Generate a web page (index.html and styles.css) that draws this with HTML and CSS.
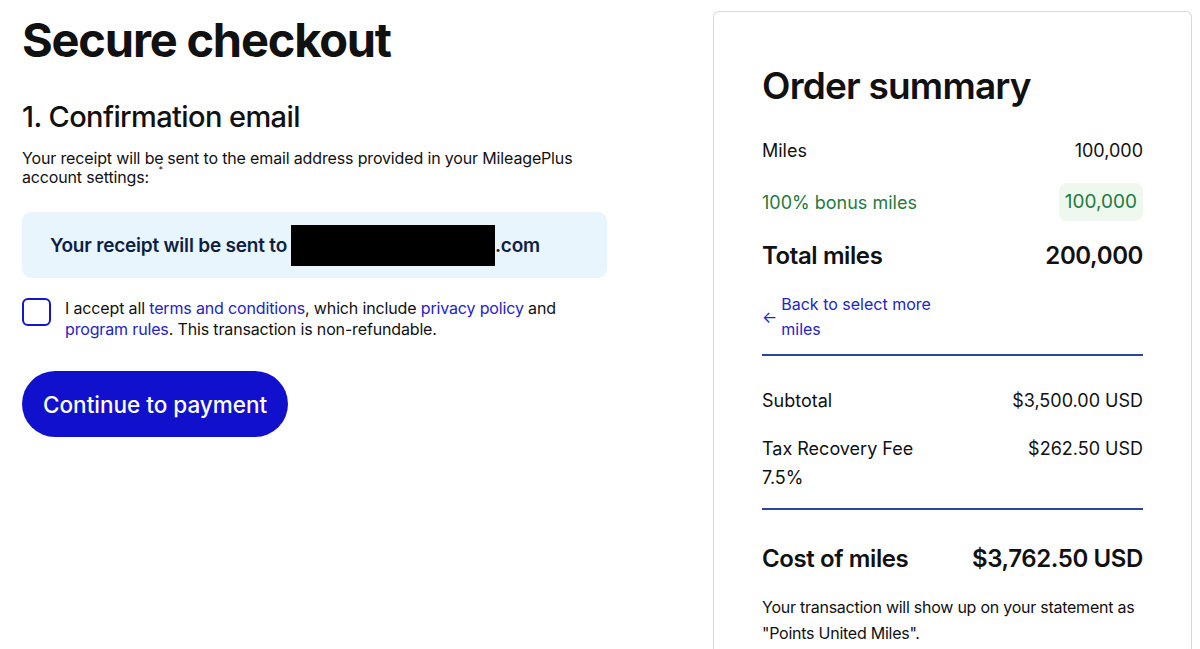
FILE: index.html
```html
<!DOCTYPE html>
<html>
<head>
<meta charset="utf-8">
<link rel="stylesheet" href="styles.css">
</head>
<body>
<div class="page">
  <main class="left">
    <h1 class="title">Secure checkout</h1>
    <h2 class="section">1. Confirmation email</h2>
    <p class="intro">Your receipt will be<span class="ast">*</span> sent to the email address provided in your MileagePlus<br>account settings:</p>
    <div class="receipt">
      <span class="receipt-text">Your receipt will be sent to</span><span class="redact"></span><span class="receipt-text">.com</span>
    </div>
    <div class="accept">
      <span class="checkbox"></span>
      <p class="accept-text">I accept all <a class="link">terms and conditions</a>, which include <a class="link">privacy policy</a> and <a class="link">program rules</a>. This transaction is non-refundable.</p>
    </div>
    <button class="cta">Continue to payment</button>
  </main>
  <aside class="summary">
    <h2 class="sum-title">Order summary</h2>
    <div class="row miles"><span>Miles</span><span>100,000</span></div>
    <div class="row bonus"><span>100% bonus miles</span><span class="pill">100,000</span></div>
    <div class="row total"><span>Total miles</span><span>200,000</span></div>
    <div class="back"><span class="arrow">&larr;</span><a class="link back-text">Back to select more<br>miles</a></div>
    <div class="rule"></div>
    <div class="row sub"><span>Subtotal</span><span>$3,500.00 USD</span></div>
    <div class="row tax"><span>Tax Recovery Fee<br>7.5%</span><span>$262.50 USD</span></div>
    <div class="rule"></div>
    <div class="row cost"><span>Cost of miles</span><span>$3,762.50 USD</span></div>
    <p class="note">Your transaction will show up on your statement as "Points United Miles".</p>
  </aside>
</div>
</body>
</html>
```
FILE: styles.css
```css
* { box-sizing: border-box; }
html, body { margin: 0; padding: 0; background: #fff; }
body { font-family: Inter, "Noto Sans", sans-serif; color: #111; overflow: hidden; height: 649px; }
.page { display: flex; gap: 106px; padding: 11px 9px 0 22px; align-items: flex-start; }
.left { width: 585px; flex: none; }
.title { font-size: 47px; font-weight: 700; letter-spacing: -1.2px; margin: 1px 0 0; line-height: 56px; }
.section { font-size: 29px; font-weight: 500; letter-spacing: -0.6px; margin: 31px 0 0; line-height: 36px; }
.intro { font-size: 16px; line-height: 16px; margin: 15px 0 0; letter-spacing: -0.15px; }
.ast { font-size: 9px; position: relative; top: 9px; margin-left: -5px; }
.receipt { margin-top: 27px; height: 66px; background: #e9f5fd; border-radius: 9px; display: flex; align-items: center; padding-left: 28px; }
.receipt-text { font-size: 19px; font-weight: 600; color: #0d1f44; letter-spacing: -0.2px; }
.redact { display: inline-block; width: 204px; height: 41px; background: #000; margin-left: 4px; }
.accept { display: flex; gap: 14px; margin-top: 20px; align-items: flex-start; }
.checkbox { width: 29px; height: 28px; border: 2px solid #1515c9; border-radius: 6px; flex: none; }
.accept-text { font-size: 16px; line-height: 21px; margin: 0; letter-spacing: -0.15px; }
.link { color: #2323c8; text-decoration: none; }
.cta { margin-top: 31px; height: 66px; padding: 0 21px; border: none; border-radius: 33px; background: #1111cd; color: #fff; font-family: inherit; font-size: 22.5px; font-weight: 500; }
.summary { width: 479px; flex: none; border: 1px solid #d5d9de; border-bottom: none; border-radius: 6px 6px 0 0; padding: 49px 48px 0 48px; height: 638px; overflow: hidden; }
.sum-title { font-size: 37px; font-weight: 600; letter-spacing: -0.8px; margin: 1px 0 0; line-height: 48px; }
.row { display: flex; justify-content: space-between; align-items: flex-start; }
.miles { font-size: 18px; margin-top: 29px; line-height: 24px; }
.bonus { font-size: 18px; color: #1f7a3c; margin-top: 20px; align-items: center; }
.pill { background: #eef8ef; border-radius: 8px; padding: 7px 6px; line-height: 24px; font-size: 19px; }
.total { font-size: 24px; font-weight: 600; margin-top: 19px; line-height: 32px; letter-spacing: -0.4px; }
.back { display: flex; gap: 4px; align-items: center; margin-top: 20px; }
.arrow { color: #2323c8; font-size: 16px; }
.back-text { font-size: 16px; line-height: 25px; }
.rule { height: 2px; background: #2a46a0; margin-top: 12px; }
.sub { font-size: 18px; line-height: 24px; margin-top: 33px; }
.tax { font-size: 18px; line-height: 29px; margin-top: 21px; }
.tax + .rule { margin-top: 16px; }
.cost { font-size: 24px; font-weight: 600; margin-top: 33px; line-height: 32px; letter-spacing: -0.4px; }
.note { font-size: 16px; line-height: 26px; margin: 19px 0 0; letter-spacing: -0.25px; }
```
